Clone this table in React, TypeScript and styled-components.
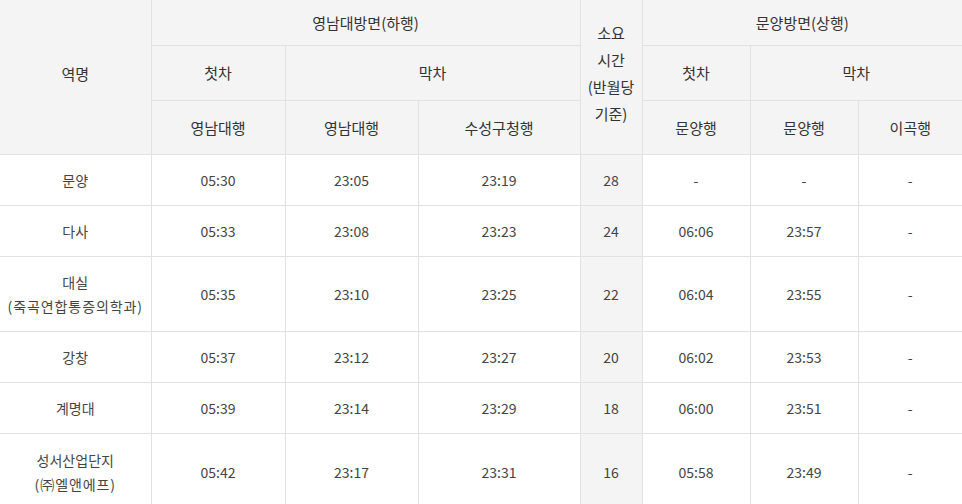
import React from "react";
import styled, { createGlobalStyle } from "styled-components";

const Global = createGlobalStyle`
  html, body { margin: 0; padding: 0; background: #fff; }
  body { font-family: "Noto Sans CJK KR", "Noto Sans", sans-serif; }
`;

const Table = styled.table`
  width: 962px;
  border-collapse: collapse;
  table-layout: fixed;
  font-size: 15px;
  text-align: center;
`;

const Th = styled.th<{ $h?: number }>`
  background: #f4f4f4;
  color: #333;
  font-weight: 400;
  border: 1px solid #e2e2e2;
  border-top: none;
  height: ${(p) => (p.$h ? `${p.$h}px` : "auto")};
  padding: 0;
  line-height: 26px;
  &:first-child { border-left: none; }
`;

const TallTh = styled(Th)`
  padding-bottom: 8px;
  line-height: 27px;
`;

const EdgeTh = styled(Th)`
  border-right: none;
`;

const Td = styled.td<{ $shade?: boolean }>`
  border: 1px solid #e2e2e2;
  color: #444;
  font-size: 14px;
  padding: 0;
  line-height: 24px;
  background: ${(p) => (p.$shade ? "#f4f4f4" : "#fff")};
  &:first-child { border-left: none; }
  &:last-child { border-right: none; }
`;

const Tr = styled.tr<{ $h: number }>`
  height: ${(p) => p.$h}px;
`;

const Sub = styled.span`
  letter-spacing: 0.9px;
`;

type Row = {
  name: React.ReactNode;
  h: number;
  v: string[];
};

const rows: Row[] = [
  { name: "문양", h: 51, v: ["05:30", "23:05", "23:19", "28", "-", "-", "-"] },
  { name: "다사", h: 51, v: ["05:33", "23:08", "23:23", "24", "06:06", "23:57", "-"] },
  {
    name: (
      <>
        대실
        <br />
        <Sub>(죽곡연합통증의학과)</Sub>
      </>
    ),
    h: 75,
    v: ["05:35", "23:10", "23:25", "22", "06:04", "23:55", "-"],
  },
  { name: "강창", h: 51, v: ["05:37", "23:12", "23:27", "20", "06:02", "23:53", "-"] },
  { name: "계명대", h: 51, v: ["05:39", "23:14", "23:29", "18", "06:00", "23:51", "-"] },
  {
    name: (
      <>
        성서산업단지
        <br />
        <Sub>(㈜엘앤에프)</Sub>
      </>
    ),
    h: 76,
    v: ["05:42", "23:17", "23:31", "16", "05:58", "23:49", "-"],
  },
];

const widths = [151, 134, 133, 162, 62, 108, 108, 104];

export default function App() {
  return (
    <>
      <Global />
      <Table>
        <colgroup>
          {widths.map((w, i) => (
            <col key={i} style={{ width: w }} />
          ))}
        </colgroup>
        <thead>
          <tr>
            <TallTh rowSpan={3}>역명</TallTh>
            <Th colSpan={3} $h={45}>영남대방면(하행)</Th>
            <TallTh rowSpan={3}>
              소요
              <br />
              시간
              <br />
              (반월당
              <br />
              기준)
            </TallTh>
            <EdgeTh colSpan={3}>문양방면(상행)</EdgeTh>
          </tr>
          <tr>
            <Th $h={54}>첫차</Th>
            <Th colSpan={2}>막차</Th>
            <Th>첫차</Th>
            <EdgeTh colSpan={2}>막차</EdgeTh>
          </tr>
          <tr>
            <Th $h={53}>영남대행</Th>
            <Th>영남대행</Th>
            <Th>수성구청행</Th>
            <Th>문양행</Th>
            <Th>문양행</Th>
            <EdgeTh>이곡행</EdgeTh>
          </tr>
        </thead>
        <tbody>
          {rows.map((r, i) => (
            <Tr key={i} $h={r.h}>
              <Td>{r.name}</Td>
              {r.v.map((c, j) => (
                <Td key={j} $shade={j === 3}>
                  {c}
                </Td>
              ))}
            </Tr>
          ))}
        </tbody>
      </Table>
    </>
  );
}
